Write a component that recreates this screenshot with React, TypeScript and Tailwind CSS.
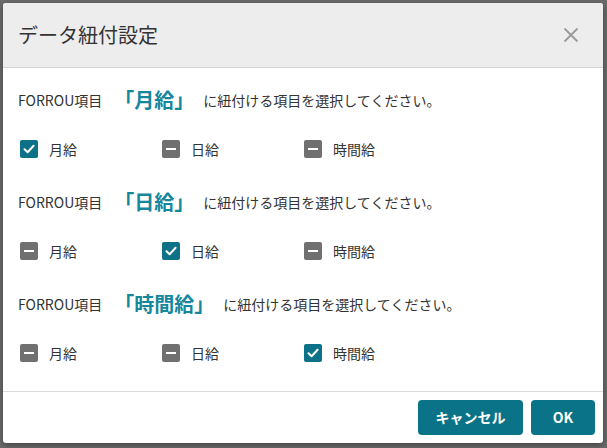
import React from "react";

const FONT = { fontFamily: '"Noto Sans CJK JP", "Noto Sans", sans-serif' };

type State = "checked" | "mixed";

function Box({ state }: { state: State }) {
  if (state === "checked") {
    return (
      <span className="flex h-[18px] w-[18px] items-center justify-center rounded-[2px] bg-[#0d7287]">
        <svg width="14" height="14" viewBox="0 0 14 14" fill="none">
          <path d="M2.5 7.2 L5.6 10.2 L11.6 3.8" stroke="white" strokeWidth="2" strokeLinecap="round" strokeLinejoin="round" />
        </svg>
      </span>
    );
  }
  return (
    <span className="flex h-[18px] w-[18px] items-center justify-center rounded-[2px] bg-[#707070]">
      <span className="h-[2px] w-[10px] bg-white" />
    </span>
  );
}

function Group({ name, checked }: { name: string; checked: number }) {
  const labels = ["月給", "日給", "時間給"];
  return (
    <div className="flex flex-col">
      <div className="flex h-[24px] items-center text-[14px] text-[#333]">
        <span>FORROU項目</span>
        <span className="ml-[12px] mr-[9px] text-[20px] font-bold leading-[24px] text-[#15879c]">「{name}」</span>
        <span>に紐付ける項目を選択してください。</span>
      </div>
      <div className="mt-[28px] flex h-[18px] items-center pl-[2px]">
        {labels.map((l, i) => (
          <div key={l} className="flex w-[142px] items-center gap-[11px] text-[14px] text-[#333]">
            <Box state={i === checked ? "checked" : "mixed"} />
            <span className="leading-[18px]">{l}</span>
          </div>
        ))}
      </div>
    </div>
  );
}

export default function App() {
  return (
    <div className="h-[448px] w-[607px] overflow-hidden bg-[#6b6b6b] pl-[3px] pt-[3px]" style={FONT}>
      <div className="flex h-[440px] w-[600px] flex-col overflow-hidden rounded-[3px] bg-white shadow-[0_2px_6px_rgba(0,0,0,0.4)]">
        <div className="flex h-[65px] shrink-0 items-center justify-between border-b border-[#d4d4d4] bg-[#ededed] pl-[15px] pr-[24px]">
          <span className="text-[20px] text-[#333]">データ紐付設定</span>
          <svg width="16" height="16" viewBox="0 0 16 16" fill="none">
            <path d="M1.5 1.5 L14.5 14.5 M14.5 1.5 L1.5 14.5" stroke="#9a9a9a" strokeWidth="1.8" />
          </svg>
        </div>
        <div className="flex flex-1 flex-col gap-[32px] pl-[15px] pt-[20px]">
          <Group name="月給" checked={0} />
          <Group name="日給" checked={1} />
          <Group name="時間給" checked={2} />
        </div>
        <div className="flex h-[52px] shrink-0 items-center justify-end gap-[8px] border-t border-[#dcdcdc] pr-[8px]">
          <button className="h-[35px] w-[105px] rounded-[4px] bg-[#0b7387] text-[14px] font-bold text-white">キャンセル</button>
          <button className="h-[35px] w-[64px] rounded-[4px] bg-[#0b7387] text-[14px] font-bold text-white">OK</button>
        </div>
      </div>
    </div>
  );
}
